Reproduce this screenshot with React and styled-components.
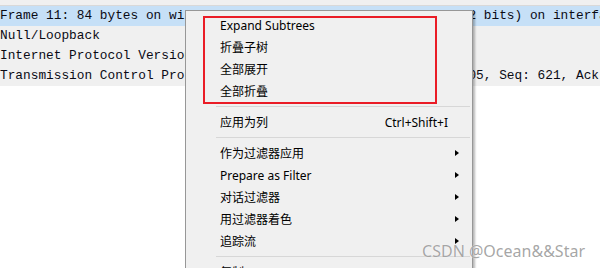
import React from 'react';
import styled, { createGlobalStyle } from 'styled-components';

const GlobalStyle = createGlobalStyle`
  html, body {
    margin: 0;
    padding: 0;
    background: #ffffff;
    overflow: hidden;
  }
`;

const treeRows = [
  {
    text: 'Frame 11: 84 bytes on wire (672 bits),  84 bytes captured (672 bits) on interface \\Device\\NPF_Loopback, id 0',
    selected: true,
  },
  { text: 'Null/Loopback' },
  { text: 'Internet Protocol Version 4, Src: 127.0.0.1, Dst: 127.0.0.1' },
  {
    text: 'Transmission Control Protocol, Src Port: 54321, Dst Port: 10605, Seq: 621, Ack: 1, Len: 0',
  },
];

const menuGroups = [
  [
    { label: 'Expand Subtrees' },
    { label: '折叠子树' },
    { label: '全部展开' },
    { label: '全部折叠' },
  ],
  [{ label: '应用为列', shortcut: 'Ctrl+Shift+I' }],
  [
    { label: '作为过滤器应用', submenu: true },
    { label: 'Prepare as Filter', submenu: true },
    { label: '对话过滤器', submenu: true },
    { label: '用过滤器着色', submenu: true },
    { label: '追踪流', submenu: true },
  ],
  [
    { label: '复制', submenu: true },
    { label: '显示分组字节', submenu: false },
  ],
];

export default function App() {
  return (
    <Page>
      <GlobalStyle />
      <TopBar />
      <Tree>
        {treeRows.map((row) => (
          <TreeRow key={row.text} selected={row.selected}>
            {row.text}
          </TreeRow>
        ))}
      </Tree>

      <ContextMenu>
        {menuGroups.map((group, gi) => (
          <React.Fragment key={gi}>
            {gi > 0 && <Separator />}
            {group.map((item) => (
              <MenuItem key={item.label}>
                <Label>{item.label}</Label>
                {item.shortcut && <Shortcut>{item.shortcut}</Shortcut>}
                <ArrowSlot>{item.submenu && <Arrow />}</ArrowSlot>
              </MenuItem>
            ))}
          </React.Fragment>
        ))}
      </ContextMenu>

      <Highlight />
      <Watermark>CSDN @Ocean&amp;&amp;Star</Watermark>
    </Page>
  );
}

const Page = styled.div`
  position: relative;
  width: 600px;
  height: 268px;
  overflow: hidden;
  background: #ffffff;
`;

const TopBar = styled.div`
  height: 5px;
  background: #f0f0f0;
  border-bottom: 1px solid #d9d9d9;
`;

const Tree = styled.div`
  display: flex;
  flex-direction: column;
  background: #f0f0f0;
`;

const TreeRow = styled.div`
  height: 20px;
  line-height: 20px;
  white-space: pre;
  overflow: hidden;
  font-family: 'Liberation Mono', 'DejaVu Sans Mono', monospace;
  font-size: 12.8px;
  color: #0a0a14;
  background: ${({ selected }) => (selected ? '#c6e0f7' : 'transparent')};
`;

const ContextMenu = styled.div`
  position: absolute;
  left: 185px;
  top: 10px;
  width: 286px;
  padding: 3px 0;
  background: #f0f0f0;
  border: 1px solid #979797;
  box-shadow: 2px 2px 2px rgba(0, 0, 0, 0.28);
  font-family: 'Noto Sans', 'Noto Sans CJK SC', sans-serif;
  font-size: 12px;
  color: #000000;
`;

const MenuItem = styled.div`
  display: flex;
  align-items: center;
  height: 22px;
  padding-left: 34px;
`;

const Label = styled.span`
  flex: 1;
  white-space: nowrap;
`;

const Shortcut = styled.span`
  white-space: nowrap;
`;

const ArrowSlot = styled.span`
  display: flex;
  align-items: center;
  width: 24px;
  padding-left: 7px;
  box-sizing: border-box;
`;

const Arrow = styled.span`
  width: 0;
  height: 0;
  border-left: 4px solid #000000;
  border-top: 3.5px solid transparent;
  border-bottom: 3.5px solid transparent;
`;

const Separator = styled.div`
  height: 1px;
  margin: 4px 2px 4px 30px;
  background: #d7d7d7;
`;

const Highlight = styled.div`
  position: absolute;
  left: 203px;
  top: 16px;
  width: 230px;
  height: 84px;
  border: 2px solid #ea1c26;
`;

const Watermark = styled.div`
  position: absolute;
  right: 15px;
  top: 240px;
  font-family: 'Noto Sans', 'Open Sans', sans-serif;
  font-size: 16px;
  color: rgba(150, 150, 150, 0.85);
  text-shadow: 0 0 1px rgba(255, 255, 255, 0.9);
  white-space: nowrap;
`;
